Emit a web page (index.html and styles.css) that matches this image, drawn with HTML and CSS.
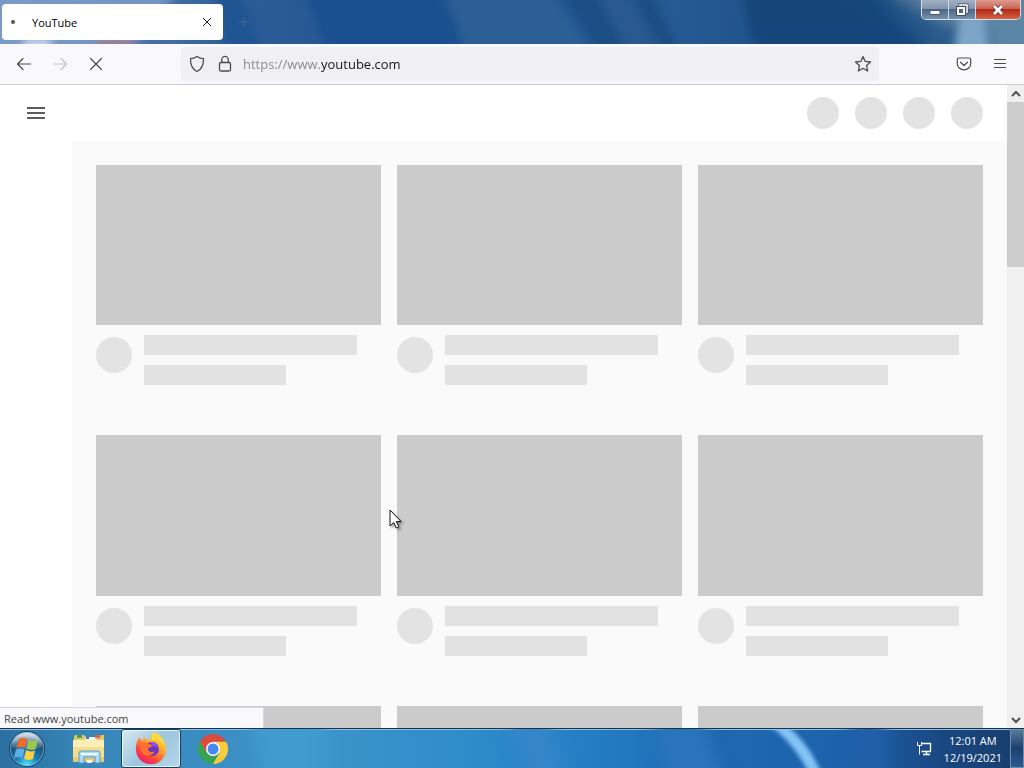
FILE: index.html
```html
<!DOCTYPE html>
<html lang="en">
<head>
    <meta charset="UTF-8">
    <meta name="viewport" content="width=device-width, initial-scale=1.0">
    <title>YouTube</title>
    <link rel="stylesheet" href="styles.css">
</head>
<body>
    <header class="titlebar">
        <svg class="glass" viewBox="0 0 1024 44" preserveAspectRatio="none" aria-hidden="true">
            <g class="soft">
                <path d="M-10-10H180L130 50H-10z" fill="#7d9dc8" opacity=".8"/>
                <path d="M25 40H52L50 50H22z" fill="#dfe6f4"/>
                <path d="M98 40H136L130 50H94z" fill="#a8788f"/>
                <path d="M215-10H240L262 50H225z" fill="#1f5592"/>
                <path d="M305-10H435L460 50H325z" fill="#1b5090"/>
                <path d="M445-10H550L590 50H465z" fill="#2c6095"/>
                <path d="M560-10H592L625 50H598z" fill="#1b4e84"/>
                <path d="M595-10H625L655 50H628z" fill="#29598f"/>
                <path d="M630-10H648L680 50H662z" fill="#1b4d82"/>
                <path d="M740-10H850L930 50H755z" fill="#164679"/>
            </g>
            <g class="softer">
                <path d="M880-12H1050V26H950z" fill="#64829f"/>
                <path d="M985 15H1040V60H990z" fill="#5b86a6"/>
            </g>
            <path class="soft" d="M960 12H984L990 52H954z" fill="#7da5c8"/>
        </svg>
        <div class="tab">
            <span class="tab-dot"></span>
            <span class="tab-title">YouTube</span>
            <button class="tab-close" aria-label="Close tab">
                <svg width="10" height="10" viewBox="0 0 10 10"><path d="M1 1l8 8M9 1L1 9"/></svg>
            </button>
        </div>
        <button class="new-tab" aria-label="New tab">
            <svg width="10" height="10" viewBox="0 0 10 10"><path d="M5 0v10M0 5h10"/></svg>
        </button>
        <div class="window-buttons">
            <button class="win-btn" aria-label="Minimize">
                <svg width="14" height="14" viewBox="0 0 14 14"><path d="M2 7.500h10v4H2z" fill="#fff" stroke="#4c5a70"/></svg>
            </button>
            <button class="win-btn" aria-label="Restore">
                <svg width="14" height="14" viewBox="0 0 14 14">
                    <path d="M5 4V2h7v7h-2" fill="none" stroke="#3f4c62" stroke-width="3"/>
                    <path d="M5 4V2h7v7h-2" fill="none" stroke="#fff" stroke-width="1.500"/>
                    <path d="M3 5h6v6H3z" fill="none" stroke="#3f4c62" stroke-width="4"/>
                    <path d="M3 5h6v6H3z" fill="#52627a" stroke="#fff" stroke-width="2"/>
                </svg>
            </button>
            <button class="win-btn win-close" aria-label="Close">
                <svg width="14" height="14" viewBox="0 0 14 14">
                    <path d="M3 3l8 8M11 3l-8 8" stroke="#6d3a40" stroke-width="4.500"/>
                    <path d="M3 3l8 8M11 3l-8 8" stroke="#fff" stroke-width="2.600"/>
                </svg>
            </button>
        </div>
    </header>

    <nav class="toolbar">
        <button class="tool" aria-label="Back">
            <svg width="16" height="16" viewBox="0 0 16 16"><path d="M14.500 8H1.500M7 2.500L1.500 8 7 13.500"/></svg>
        </button>
        <button class="tool" aria-label="Forward" disabled>
            <svg width="16" height="16" viewBox="0 0 16 16"><path d="M1.500 8h13M9 2.500L14.500 8 9 13.500"/></svg>
        </button>
        <button class="tool" aria-label="Stop">
            <svg width="16" height="16" viewBox="0 0 16 16"><path d="M2.500 2.500l11 11M13.500 2.500l-11 11"/></svg>
        </button>
        <div class="urlbar">
            <button class="url-icon" aria-label="Tracking protection">
                <svg width="16" height="18" viewBox="0 0 16 18"><path d="M8 1.500C6 2.800 3.800 3.600 1.500 3.700c-.2 6 1.500 10.300 6.500 12.800 5-2.500 6.700-6.800 6.500-12.800C12.200 3.600 10 2.800 8 1.500z"/></svg>
            </button>
            <button class="url-icon" aria-label="Site information">
                <svg width="16" height="18" viewBox="0 0 16 18"><rect x="2.500" y="7.500" width="11" height="8.500" rx="1.500"/><path d="M4.700 7.500V5a3.300 3.700 0 0 1 6.600 0v2.500"/></svg>
            </button>
            <input class="url-input" type="text" aria-label="Address" value="https://www.youtube.com">
            <button class="url-icon" aria-label="Bookmark this page">
                <svg width="18" height="18" viewBox="0 0 18 18"><path d="M9 1.500l2.200 4.900 5.300.6-3.900 3.600 1 5.400L9 13.300 4.400 16l1-5.400L1.500 7l5.300-.6z"/></svg>
            </button>
        </div>
        <button class="tool" aria-label="Save to Pocket">
            <svg width="16" height="16" viewBox="0 0 16 16"><path d="M2.800 2h10.400c.9 0 1.500.6 1.500 1.500v3.900a6.700 6.500 0 0 1-13.400 0V3.500C1.300 2.600 1.900 2 2.800 2zM4.500 6.200L8 9.500l3.500-3.300"/></svg>
        </button>
        <button class="tool" aria-label="Menu">
            <svg width="16" height="16" viewBox="0 0 16 16"><path d="M2.500 3.500h11M2.500 7.500h11M2.500 11.500h11"/></svg>
        </button>
    </nav>

    <div class="viewport">
        <main class="page">
            <div class="masthead">
                <button class="guide-btn" aria-label="Guide">
                    <svg width="18" height="12" viewBox="0 0 18 12"><path d="M0 0h18v2H0zM0 5h18v2H0zM0 10h18v2H0z" fill="#5c5c5c"/></svg>
                </button>
                <div class="masthead-icons">
                    <span class="circle"></span>
                    <span class="circle"></span>
                    <span class="circle"></span>
                    <span class="circle"></span>
                </div>
            </div>
            <div class="grid">
                <div class="card"><div class="thumb"></div><div class="meta"><span class="avatar"></span><div class="lines"><div class="line"></div><div class="line short"></div></div></div></div>
                <div class="card"><div class="thumb"></div><div class="meta"><span class="avatar"></span><div class="lines"><div class="line"></div><div class="line short"></div></div></div></div>
                <div class="card"><div class="thumb"></div><div class="meta"><span class="avatar"></span><div class="lines"><div class="line"></div><div class="line short"></div></div></div></div>
                <div class="card"><div class="thumb"></div><div class="meta"><span class="avatar"></span><div class="lines"><div class="line"></div><div class="line short"></div></div></div></div>
                <div class="card"><div class="thumb"></div><div class="meta"><span class="avatar"></span><div class="lines"><div class="line"></div><div class="line short"></div></div></div></div>
                <div class="card"><div class="thumb"></div><div class="meta"><span class="avatar"></span><div class="lines"><div class="line"></div><div class="line short"></div></div></div></div>
                <div class="card"><div class="thumb"></div></div>
                <div class="card"><div class="thumb"></div></div>
                <div class="card"><div class="thumb"></div></div>
            </div>
        </main>
        <div class="scrollbar">
            <button class="scroll-btn" aria-label="Scroll up">
                <svg width="10" height="8" viewBox="0 0 10 8"><path d="M1 6l4-4 4 4"/></svg>
            </button>
            <div class="scroll-thumb"></div>
            <button class="scroll-btn scroll-down" aria-label="Scroll down">
                <svg width="10" height="8" viewBox="0 0 10 8"><path d="M1 2l4 4 4-4"/></svg>
            </button>
        </div>
        <div class="status">Read www.youtube.com</div>
    </div>

    <footer class="taskbar">
        <svg class="glass" viewBox="0 0 1024 40" preserveAspectRatio="none" aria-hidden="true">
            <g class="softer">
                <path d="M250-15H325V55H265z" fill="#419bcd"/>
                <path d="M505-15H545L570 55H530z" fill="#3585c8"/>
                <path d="M650-15H700L725 55H670z" fill="#2b74bc"/>
                <path d="M850-15H885V55H850z" fill="#2260a9"/>
            </g>
            <path class="ray" d="M764-8C782 5 799 22 810 48H822C812 20 798 6 782-8z" fill="#84c4f5"/>
        </svg>
        <button class="start" aria-label="Start">
            <svg width="38" height="38" viewBox="0 0 38 38">
                <defs>
                    <radialGradient id="orb" cx=".5" cy=".95" r=".9">
                        <stop offset="0" stop-color="#4fe2fb"/>
                        <stop offset=".35" stop-color="#1c7fb8"/>
                        <stop offset=".75" stop-color="#174a72"/>
                        <stop offset="1" stop-color="#8fb3cc"/>
                    </radialGradient>
                    <linearGradient id="shine" x2="0" y2="1">
                        <stop offset="0" stop-color="#fff" stop-opacity=".65"/>
                        <stop offset="1" stop-color="#fff" stop-opacity=".1"/>
                    </linearGradient>
                </defs>
                <circle cx="19" cy="19" r="17.500" fill="url(#orb)" stroke="#143f63"/>
                <circle cx="19" cy="19" r="16.500" fill="none" stroke="#9fd3ea" opacity=".6"/>
                <path d="M4 17a15 14 0 0 1 30 0c-8 3-22 3-30 0z" fill="url(#shine)"/>
                <path d="M11 9c3-1.700 5.500-1.500 8 0l-2 9c-2.500-1.500-5.500-1.500-8.500 0z" fill="#ed6a2b"/>
                <path d="M20.500 10c3 1.500 6 1.500 9.500 0l-2.500 9c-3 1.500-6 1.200-9-.5z" fill="#9bc94b"/>
                <path d="M8 19.500c3-1.500 6-1.500 8.500 0l-2 8.500c-2.500-1.500-5.500-1.500-8.500 0z" fill="#5eafe8"/>
                <path d="M18 20c3 1.700 6 2 9 .5L25 29c-3 1.500-6.500 1.300-9-.5z" fill="#fbd044"/>
            </svg>
        </button>
        <button class="task" aria-label="Windows Explorer">
            <svg width="34" height="34" viewBox="0 0 34 34">
                <path d="M2 5l1-2h9l2 2h14l1-2h3v10H2z" fill="#e6c46a"/>
                <path d="M5 3h5v3H5z" fill="#43a454"/>
                <path d="M13 5h11v3H13z" fill="#f5f5ee"/>
                <path d="M14 5h3v2h-3z" fill="#3677bd"/>
                <path d="M23 3h5v3h-5z" fill="#d96651"/>
                <path d="M1 8h31v22H1z" fill="#f4df91"/>
                <path d="M1 8h31v7H1z" fill="#fbeeb6"/>
                <path d="M1 25h31v5H1z" fill="#e9c971"/>
                <path d="M7 31V21q0-2 2-2h17q2 0 2 2v10h-5v-6H12v6z" fill="#a8dcf5" stroke="#569cc9"/>
                <path d="M9 22h17" stroke="#eefaff" stroke-width="2"/>
                <path d="M15 28h5v3h-5z" fill="#f1fbff"/>
            </svg>
        </button>
        <button class="task active" aria-label="Mozilla Firefox">
            <svg width="34" height="34" viewBox="0 0 34 34">
                <defs>
                    <linearGradient id="fox" x1=".85" y1=".1" x2=".25" y2="1">
                        <stop offset="0" stop-color="#ffe64a"/>
                        <stop offset=".4" stop-color="#ff9a2b"/>
                        <stop offset=".7" stop-color="#fb4638"/>
                        <stop offset="1" stop-color="#ec1e70"/>
                    </linearGradient>
                </defs>
                <path d="M3 10c-2 6-1.500 12 2 16.500 6 7.500 17 7.500 23 1 5-5.500 5.500-14 1-19.500.2 2 0 3-.5 4C28 6 25 1.500 19 1c-2.500 2.500-3 5-2.500 7.500-3 0-4.500-1-5.500-3-1.500 1-2 1.500-2.500 3C7 8 6 7 5.500 5 4.500 6.500 3.500 8 3 10z" fill="url(#fox)"/>
                <path d="M19 1c6 0 11 5 12 12-3-4-7-5-13-5-.5-3 0-5 1-7z" fill="#ffda3d"/>
                <circle cx="18" cy="17" r="7" fill="#6a35c0"/>
                <path d="M16 10c5 0 8 3 8 7-1-2-3-3-5-3z" fill="#9450e8"/>
                <path d="M6 12c3-2 6-1 8 0 2 0 3.500.5 4.500 1.500-1 2-4 1.500-4.500 3.500 0 3 4 4 7 2-2.500 6-10.500 6-13.500 1-1-3-1.500-5-1.500-8z" fill="#ff6f2e"/>
            </svg>
        </button>
        <button class="task" aria-label="Google Chrome">
            <svg width="32" height="32" viewBox="0 0 32 32">
                <path d="M3 8.500A15 15 0 0 0 16 31l7-11-7-4z" fill="#35a456"/>
                <path d="M29 8.500H16V16l6.500 3.800L16 31A15 15 0 0 0 29 8.500z" fill="#fbcb3c"/>
                <path d="M3 8.500A15 15 0 0 1 29 8.500H16L9.500 19.800z" fill="#dd4b3e"/>
                <circle cx="16" cy="16" r="7" fill="#fff"/>
                <circle cx="16" cy="16" r="5.500" fill="#4688f1"/>
            </svg>
        </button>
        <div class="tray">
            <svg width="16" height="16" viewBox="0 0 16 16" fill="none" stroke="#fff" aria-label="Network" role="img">
                <path d="M6 2.500h8.500v8H5.500M10.500 10.500v3M7 13.500h7" stroke-width="1.300"/>
                <path d="M1.500 1v3.500h4V1M3.500 4.500v9"/>
            </svg>
            <div class="clock">
                <div>12:01 AM</div>
                <div>12/19/2021</div>
            </div>
        </div>
        <button class="show-desktop" aria-label="Show desktop"></button>
    </footer>

    <svg class="cursor" width="16" height="22" viewBox="0 0 16 22" aria-hidden="true">
        <path d="M1 1v16l3.700-3.500L7.200 19l2.600-1.200-2.500-5.300H12z" fill="#fff" stroke="#111"/>
    </svg>
</body>
</html>
```
FILE: styles.css
```css
* {
    box-sizing: border-box;
    margin: 0;
    padding: 0;
}

body {
    display: flex;
    flex-direction: column;
    height: 100vh;
    overflow: hidden;
    font-family: "Open Sans", "Noto Sans", sans-serif;
    font-size: 11px;
    color: #15141a;
    background-color: #fff;
}

button {
    display: flex;
    align-items: center;
    justify-content: center;
    flex-shrink: 0;
    background: none;
    border: none;
    cursor: pointer;
}

.glass {
    position: absolute;
    inset: 0;
    width: 100%;
    height: 100%;
}

.soft {
    filter: blur(4px);
}

.softer {
    filter: blur(8px);
}

.ray {
    filter: blur(2px);
}

/* title bar */
.titlebar {
    position: relative;
    display: flex;
    align-items: flex-start;
    height: 44px;
    padding: 4px 3px 0 2px;
    overflow: hidden;
    flex-shrink: 0;
    background: linear-gradient(to right, #6f8fc0, #2d5c97 24%, #1d5290 45%, #265a94 66%, #184a80 85%, #3d6e99);
}

.tab {
    position: relative;
    display: flex;
    align-items: center;
    width: 221px;
    height: 36px;
    padding: 0 11px 0 9px;
    border-radius: 4px;
    background-color: #fff;
}

.tab-dot {
    width: 4px;
    height: 4px;
    border-radius: 50%;
    background-color: #555;
}

.tab-title {
    flex: 1;
    padding-left: 17px;
    color: #000;
}

.tab-close,
.new-tab {
    stroke: #222;
    fill: none;
}

.new-tab {
    position: relative;
    width: 42px;
    height: 36px;
    stroke: #4f6785;
}

.window-buttons {
    position: relative;
    display: flex;
    margin: -4px 0 0 auto;
    border: 1px solid #d3dde8;
    border-top: none;
    border-radius: 0 0 5px 5px;
    overflow: hidden;
}

.win-btn {
    width: 27px;
    height: 19px;
    border-right: 1px solid #cdd8e4;
    background: linear-gradient(#a3b0c4, #8294ad 45%, #4e6685 50%, #7491ad);
}

.win-close {
    width: 44px;
    border-right: none;
    background: linear-gradient(#dc9b8e, #cc6553 45%, #b02a17 50%, #d76340);
}

/* toolbar */
.toolbar {
    display: flex;
    align-items: center;
    height: 41px;
    padding: 0 6px;
    flex-shrink: 0;
    background-color: #f9f9fb;
    border-bottom: 1px solid #ccccd2;
}

.tool {
    width: 36px;
    height: 32px;
    fill: none;
    stroke: #4a4a52;
    stroke-width: 1.2;
    stroke-linecap: round;
    stroke-linejoin: round;
}

.tool:disabled {
    stroke: #c3c3c8;
}

.urlbar {
    display: flex;
    align-items: center;
    flex: 1;
    height: 34px;
    margin: 0 67px;
    padding: 0 2px;
    border-radius: 4px;
    background-color: #f0f0f4;
}

.url-icon {
    width: 28px;
    height: 28px;
    fill: none;
    stroke: #4a4a52;
    stroke-width: 1.3;
    stroke-linejoin: round;
}

/* dimmed scheme and subdomain, dark domain */
.url-input {
    flex: 1;
    min-width: 0;
    height: 28px;
    padding-left: 4px;
    border: none;
    outline: none;
    font: 13px "Open Sans", "Noto Sans", sans-serif;
    color: transparent;
    background: linear-gradient(to right, #85858c 81px, #15141a 81px);
    background-clip: text;
    -webkit-background-clip: text;
}

/* page */
.viewport {
    position: relative;
    display: flex;
    flex: 1;
    min-height: 0;
}

.page {
    flex: 1;
    min-width: 0;
    overflow: hidden;
}

.masthead {
    display: flex;
    align-items: center;
    justify-content: space-between;
    height: 56px;
    padding: 0 24px 0 16px;
}

.guide-btn {
    width: 40px;
    height: 40px;
}

.masthead-icons {
    display: flex;
    gap: 16px;
}

.circle {
    width: 32px;
    height: 32px;
    border-radius: 50%;
    background-color: #e3e3e3;
}

.grid {
    display: grid;
    grid-template-columns: repeat(3, 1fr);
    column-gap: 16px;
    row-gap: 50px;
    margin-left: 72px;
    padding: 24px;
    background-color: #fafafa;
}

.thumb {
    aspect-ratio: 16 / 9;
    background-color: #cbcbcb;
}

.meta {
    display: flex;
    gap: 12px;
    padding-top: 10px;
}

.avatar {
    width: 36px;
    height: 36px;
    margin-top: 2px;
    border-radius: 50%;
    background-color: #e3e3e3;
}

.lines {
    flex: 1;
}

.line {
    width: 90%;
    height: 20px;
    background-color: #e2e2e2;
}

.short {
    width: 60%;
    margin-top: 10px;
}

.scrollbar {
    display: flex;
    flex-direction: column;
    width: 17px;
    background-color: #f0f0f0;
}

.scroll-btn {
    height: 17px;
    fill: none;
    stroke: #505050;
    stroke-width: 2;
}

.scroll-thumb {
    height: 165px;
    background-color: #cdcdcd;
}

.scroll-down {
    margin-top: auto;
}

.status {
    position: absolute;
    left: 0;
    bottom: 0;
    width: 264px;
    height: 21px;
    padding-left: 4px;
    line-height: 21px;
    color: #444;
    background-color: #f9f9fb;
    border: solid #d8d8dc;
    border-width: 1px 1px 0 0;
}

/* taskbar */
.taskbar {
    position: relative;
    display: flex;
    height: 40px;
    flex-shrink: 0;
    overflow: hidden;
    border-top: 1px solid #12344f;
    box-shadow: inset 0 1px #8fc0df;
    background: linear-gradient(to right, #2b6f9f, #3786b8 8%, #3d94ca 30%, #2f8dca 45%, #237dc4 58%, #1f68b0 70%, #1d61ad 83%, #1a4781 92%, #173e6c);
}

.start {
    position: relative;
    width: 54px;
    margin-right: 5px;
}

.task {
    position: relative;
    width: 60px;
    margin-right: 2px;
}

.active {
    border: 1px solid #17405f;
    border-radius: 3px;
    box-shadow: inset 0 0 0 1px #e8f5fc;
    background: linear-gradient(135deg, #d9e9f3, #9cc5df 50%, #b7d6e9);
}

.tray {
    position: relative;
    display: flex;
    align-items: center;
    gap: 12px;
    margin-left: auto;
    padding-right: 8px;
}

.clock {
    line-height: 17px;
    text-align: center;
    color: #fff;
}

.show-desktop {
    position: relative;
    width: 14px;
    border: 1px solid #6d8eae;
    background: linear-gradient(#5a7898, #1c416d 50%, #2b5b8d);
}

.cursor {
    position: absolute;
    left: 38%;
    top: 509px;
    filter: drop-shadow(2px 2px 1px rgba(0, 0, 0, 0.35));
}
```
